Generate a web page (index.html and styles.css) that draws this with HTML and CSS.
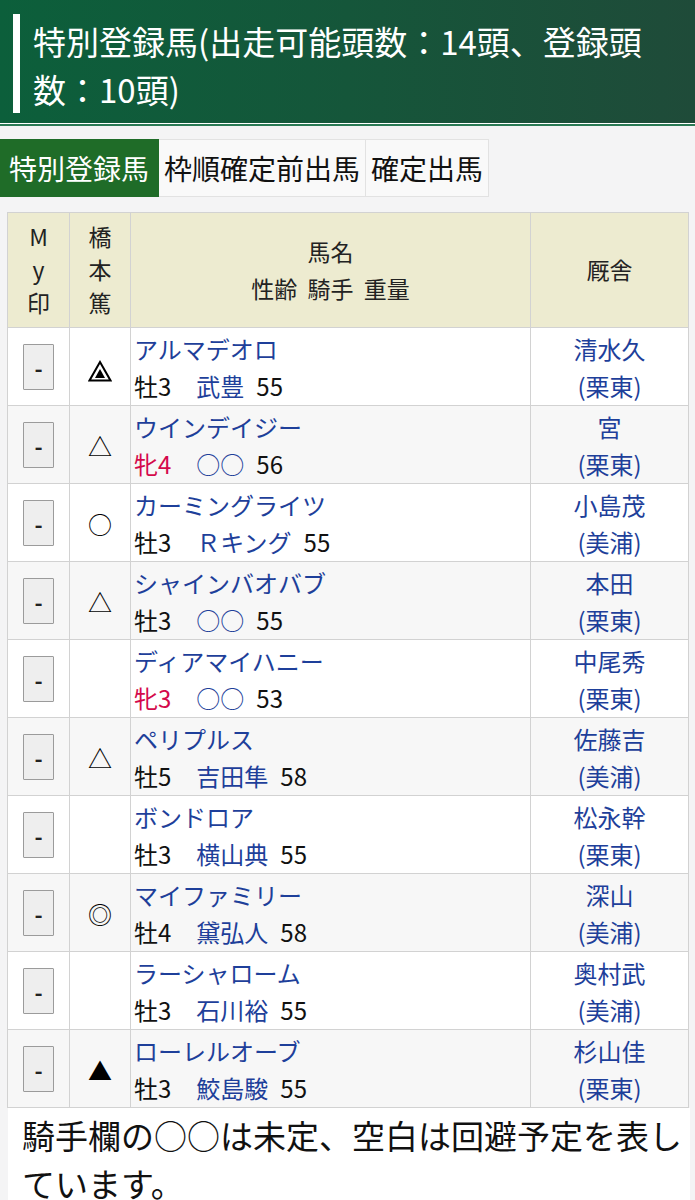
FILE: index.html
```html
<!DOCTYPE html>
<html lang="ja">
<head>
<meta charset="utf-8">
<title>特別登録馬</title>
<link rel="stylesheet" href="styles.css">
</head>
<body>
<header class="page-head">
  <h1 class="page-title">特別登録馬(出走可能頭数：14頭、登録頭数：10頭)</h1>
</header>

<nav class="tabs">
  <a class="tab active">特別登録馬</a>
  <a class="tab">枠順確定前出馬</a>
  <a class="tab">確定出馬</a>
</nav>

<table class="entries">
  <colgroup>
    <col class="w-my">
    <col class="w-mark">
    <col class="w-name">
    <col class="w-stable">
  </colgroup>
  <thead>
    <tr>
      <th class="c-my">M<br>y<br>印</th>
      <th class="c-mark">橋<br>本<br>篤</th>
      <th class="c-name">馬名<br>性齢&nbsp;&nbsp;騎手&nbsp;&nbsp;重量</th>
      <th class="c-stable">厩舎</th>
    </tr>
  </thead>
  <tbody>
    <tr>
      <td class="c-my"><button class="my-btn">-</button></td>
      <td class="c-mark"><svg class="mark-svg" width="24" height="22" viewBox="0 0 24 22"><polygon points="12,2 22.5,20.5 1.5,20.5" fill="none" stroke="#000" stroke-width="2"/><polygon points="12,9 17,18 7,18" fill="#000"/></svg></td>
      <td class="c-name"><a class="horse">アルマデオロ</a><br><span class="sex">牡3</span><a class="jockey">武豊</a><span class="wt">55</span></td>
      <td class="c-stable"><a class="stable">清水久<br>(栗東)</a></td>
    </tr>
    <tr>
      <td class="c-my"><button class="my-btn">-</button></td>
      <td class="c-mark">△</td>
      <td class="c-name"><a class="horse">ウインデイジー</a><br><span class="sex female">牝4</span><a class="jockey">○○</a><span class="wt">56</span></td>
      <td class="c-stable"><a class="stable">宮<br>(栗東)</a></td>
    </tr>
    <tr>
      <td class="c-my"><button class="my-btn">-</button></td>
      <td class="c-mark">○</td>
      <td class="c-name"><a class="horse">カーミングライツ</a><br><span class="sex">牡3</span><a class="jockey">Ｒキング</a><span class="wt">55</span></td>
      <td class="c-stable"><a class="stable">小島茂<br>(美浦)</a></td>
    </tr>
    <tr>
      <td class="c-my"><button class="my-btn">-</button></td>
      <td class="c-mark">△</td>
      <td class="c-name"><a class="horse">シャインバオバブ</a><br><span class="sex">牡3</span><a class="jockey">○○</a><span class="wt">55</span></td>
      <td class="c-stable"><a class="stable">本田<br>(栗東)</a></td>
    </tr>
    <tr>
      <td class="c-my"><button class="my-btn">-</button></td>
      <td class="c-mark"></td>
      <td class="c-name"><a class="horse">ディアマイハニー</a><br><span class="sex female">牝3</span><a class="jockey">○○</a><span class="wt">53</span></td>
      <td class="c-stable"><a class="stable">中尾秀<br>(栗東)</a></td>
    </tr>
    <tr>
      <td class="c-my"><button class="my-btn">-</button></td>
      <td class="c-mark">△</td>
      <td class="c-name"><a class="horse">ペリプルス</a><br><span class="sex">牡5</span><a class="jockey">吉田隼</a><span class="wt">58</span></td>
      <td class="c-stable"><a class="stable">佐藤吉<br>(美浦)</a></td>
    </tr>
    <tr>
      <td class="c-my"><button class="my-btn">-</button></td>
      <td class="c-mark"></td>
      <td class="c-name"><a class="horse">ボンドロア</a><br><span class="sex">牡3</span><a class="jockey">横山典</a><span class="wt">55</span></td>
      <td class="c-stable"><a class="stable">松永幹<br>(栗東)</a></td>
    </tr>
    <tr>
      <td class="c-my"><button class="my-btn">-</button></td>
      <td class="c-mark">◎</td>
      <td class="c-name"><a class="horse">マイファミリー</a><br><span class="sex">牡4</span><a class="jockey">黛弘人</a><span class="wt">58</span></td>
      <td class="c-stable"><a class="stable">深山<br>(美浦)</a></td>
    </tr>
    <tr>
      <td class="c-my"><button class="my-btn">-</button></td>
      <td class="c-mark"></td>
      <td class="c-name"><a class="horse">ラーシャローム</a><br><span class="sex">牡3</span><a class="jockey">石川裕</a><span class="wt">55</span></td>
      <td class="c-stable"><a class="stable">奥村武<br>(美浦)</a></td>
    </tr>
    <tr>
      <td class="c-my"><button class="my-btn">-</button></td>
      <td class="c-mark">▲</td>
      <td class="c-name"><a class="horse">ローレルオーブ</a><br><span class="sex">牡3</span><a class="jockey">鮫島駿</a><span class="wt">55</span></td>
      <td class="c-stable"><a class="stable">杉山佳<br>(栗東)</a></td>
    </tr>
  </tbody>
</table>

<p class="note">騎手欄の○○は未定、空白は回避予定を表しています。</p>
</body>
</html>
```

FILE: styles.css
```css
html, body {
  margin: 0;
  padding: 0;
}
body {
  background: #f4f4f5;
  font-family: "Noto Sans CJK JP", "Noto Sans", sans-serif;
  color: #111;
  width: 695px;
  overflow: hidden;
}

.page-head {
  background: linear-gradient(90deg, #0c5f3b 0%, #15563a 50%, #1f4b39 100%);
  padding: 14px 40px 10px 13px;
  border-bottom: 1px solid #ffffff;
  box-shadow: 0 2px 0 #2a7a55;
}
.page-title {
  margin: 0;
  padding: 3px 0 0 13px;
  border-left: 7px solid #ffffff;
  color: #ffffff;
  font-size: 33px;
  font-weight: normal;
  line-height: 48px;
}

.tabs {
  display: flex;
  margin-top: 15px;
  height: 58px;
}
.tab {
  display: block;
  font-size: 28px;
  line-height: 56px;
  padding: 0 5px;
  background: #f9f9f9;
  border: 1px solid #e2e2e2;
  border-left: none;
  color: #111;
}
.tab.active {
  background: #1f6c28;
  color: #ffffff;
  border: none;
  line-height: 58px;
  padding: 0 10px 0 9px;
}

.entries {
  margin: 15px 0 0 7px;
  width: 681px;
  border-collapse: collapse;
  table-layout: fixed;
  background: #ffffff;
}
.w-my { width: 62px; }
.w-mark { width: 61px; }
.w-name { width: 400px; }
.w-stable { width: 158px; }

.entries th,
.entries td {
  border: 1px solid #d2d2d2;
  box-sizing: border-box;
  overflow: hidden;
}
.entries thead th {
  background: #edebd0;
  font-weight: normal;
  font-size: 23px;
  line-height: 33px;
  padding: 7px 2px 8px;
  color: #222;
  text-align: center;
  vertical-align: middle;
}
.entries thead th.c-name {
  line-height: 37px;
}

.entries tbody td {
  font-size: 24px;
  line-height: 37px;
  padding: 2px 3px 1px;
  vertical-align: middle;
  white-space: nowrap;
}
.entries tbody tr:nth-child(even) td {
  background: #f7f7f7;
}
.entries tbody td.c-my,
.entries tbody td.c-mark,
.entries tbody td.c-stable {
  text-align: center;
}
.entries tbody td.c-mark {
  font-size: 24px;
  color: #000;
}
.mark-svg {
  display: inline-block;
  vertical-align: middle;
}

.my-btn {
  width: 31px;
  height: 46px;
  padding: 0;
  background: #eeeeee;
  border: 1px solid #9b9b9b;
  border-radius: 1px;
  font-family: "Noto Sans CJK JP", sans-serif;
  font-size: 22px;
  font-weight: bold;
  line-height: 44px;
  color: #222;
  vertical-align: middle;
}

.horse,
.jockey,
.stable {
  color: #1e3f9a;
  text-decoration: none;
}
.sex {
  color: #111;
  margin-right: 25px;
}
.sex.female {
  color: #d4094b;
}
.jockey {
  margin-right: 12px;
}
.wt {
  color: #111;
}

.note {
  margin: 0 0 0 8px;
  width: 668px;
  padding: 3px 0 0 14px;
  background: #ffffff;
  font-size: 33px;
  line-height: 48px;
  color: #111;
}
```
